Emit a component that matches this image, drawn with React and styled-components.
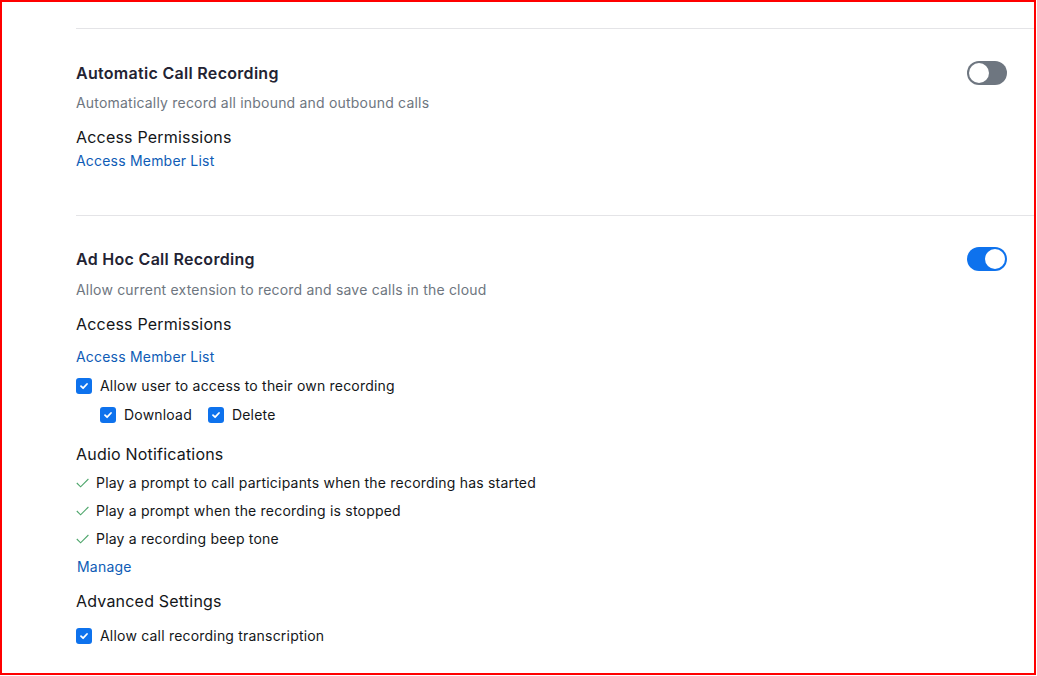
import React from 'react';
import styled, { createGlobalStyle } from 'styled-components';

const GlobalStyle = createGlobalStyle`
  html, body { margin: 0; padding: 0; background: #fff; }
  body { font-family: Inter, "Liberation Sans", Arial, sans-serif; color: #131619; }
  * { box-sizing: border-box; }
`;

const Frame = styled.div`
  width: 1036px;
  height: 675px;
  border: 2px solid #ff0000;
  overflow: hidden;
  padding: 26px 0 0 74px;
`;

const Section = styled.section`
  border-top: 1px solid #e4e4e7;
  padding: ${p => p.$top || 32}px 27px ${p => p.$bottom || 0}px 0;
`;

const HeadRow = styled.div`
  display: flex;
  align-items: center;
  justify-content: space-between;
  height: 24px;
`;

const Title = styled.h3`
  margin: 0;
  font-size: 16px;
  font-weight: 600;
  line-height: 24px;
  letter-spacing: 0.3px;
  color: #232333;
`;

const Desc = styled.p`
  margin: ${p => p.$mt}px 0 0;
  font-size: 14px;
  line-height: 20px;
  letter-spacing: 0.2px;
  color: #6e7680;
`;

const SubHead = styled.h4`
  margin: ${p => p.$mt}px 0 0;
  font-size: 16px;
  font-weight: 400;
  line-height: 24px;
  letter-spacing: 0.2px;
  color: #131619;
`;

const Link = styled.a`
  display: block;
  margin: ${p => p.$mt}px 0 0 ${p => p.$ml || 0}px;
  font-size: 14px;
  line-height: 20px;
  letter-spacing: 0.2px;
  color: #0e5cb6;
  text-decoration: none;
  cursor: pointer;
`;

const Track = styled.button`
  position: relative;
  width: 40px;
  height: 24px;
  border: none;
  border-radius: 12px;
  padding: 0;
  background: ${p => (p.$on ? '#0e72ed' : '#6e7680')};
  cursor: pointer;
`;

const Knob = styled.span`
  position: absolute;
  top: 2px;
  left: ${p => (p.$on ? 18 : 2)}px;
  width: 20px;
  height: 20px;
  border-radius: 50%;
  background: #fff;
`;

const CheckRow = styled.label`
  display: flex;
  align-items: center;
  gap: 8px;
  margin: ${p => p.$mt}px 0 0 ${p => p.$ml || 0}px;
  font-size: 14px;
  line-height: 20px;
  letter-spacing: 0.2px;
  color: #131619;
`;

const Inline = styled.div`
  display: flex;
  gap: 16px;
  margin: ${p => p.$mt}px 0 0 24px;
`;

const Box = styled.span`
  display: inline-flex;
  align-items: center;
  justify-content: center;
  width: 16px;
  height: 16px;
  border-radius: 3px;
  background: #0e72ed;
  flex: none;
`;

const Item = styled.div`
  display: flex;
  align-items: center;
  gap: 7px;
  margin-top: ${p => p.$mt}px;
  font-size: 14px;
  line-height: 20px;
  letter-spacing: 0.2px;
  color: #131619;
`;

const Toggle = ({ on }) => (
  <Track $on={on} aria-pressed={on}>
    <Knob $on={on} />
  </Track>
);

const Checkbox = ({ children, mt, ml }) => (
  <CheckRow $mt={mt} $ml={ml}>
    <Box>
      <svg width="10" height="10" viewBox="0 0 10 10">
        <path d="M2 5.2 L4.1 7.2 L8 3" fill="none" stroke="#fff" strokeWidth="1.8" strokeLinecap="round" strokeLinejoin="round" />
      </svg>
    </Box>
    {children}
  </CheckRow>
);

const Tick = () => (
  <svg width="13" height="12" viewBox="0 0 13 12">
    <path d="M0.8 6 L4.6 9.8 L12.4 2" fill="none" stroke="#4fa66c" strokeWidth="1.1" />
  </svg>
);

const notices = [
  'Play a prompt to call participants when the recording has started',
  'Play a prompt when the recording is stopped',
  'Play a recording beep tone',
];

export default function App() {
  return (
    <>
      <GlobalStyle />
      <Frame>
        <Section $top={32} $bottom={44}>
          <HeadRow>
            <Title>Automatic Call Recording</Title>
            <Toggle on={false} />
          </HeadRow>
          <Desc $mt={8}>Automatically record all inbound and outbound calls</Desc>
          <SubHead $mt={12}>Access Permissions</SubHead>
          <Link $mt={2}>Access Member List</Link>
        </Section>
        <Section $top={31}>
          <HeadRow>
            <Title>Ad Hoc Call Recording</Title>
            <Toggle on />
          </HeadRow>
          <Desc $mt={9}>Allow current extension to record and save calls in the cloud</Desc>
          <SubHead $mt={12}>Access Permissions</SubHead>
          <Link $mt={11}>Access Member List</Link>
          <Checkbox mt={9}>Allow user to access to their own recording</Checkbox>
          <Inline $mt={9}>
            <Checkbox mt={0}>Download</Checkbox>
            <Checkbox mt={0}>Delete</Checkbox>
          </Inline>
          <SubHead $mt={17}>Audio Notifications</SubHead>
          {notices.map((n, i) => (
            <Item key={n} $mt={i === 0 ? 7 : 8}>
              <Tick />
              {n}
            </Item>
          ))}
          <Link $mt={8} $ml={1}>Manage</Link>
          <SubHead $mt={12}>Advanced Settings</SubHead>
          <Checkbox mt={13}>Allow call recording transcription</Checkbox>
        </Section>
      </Frame>
    </>
  );
}
